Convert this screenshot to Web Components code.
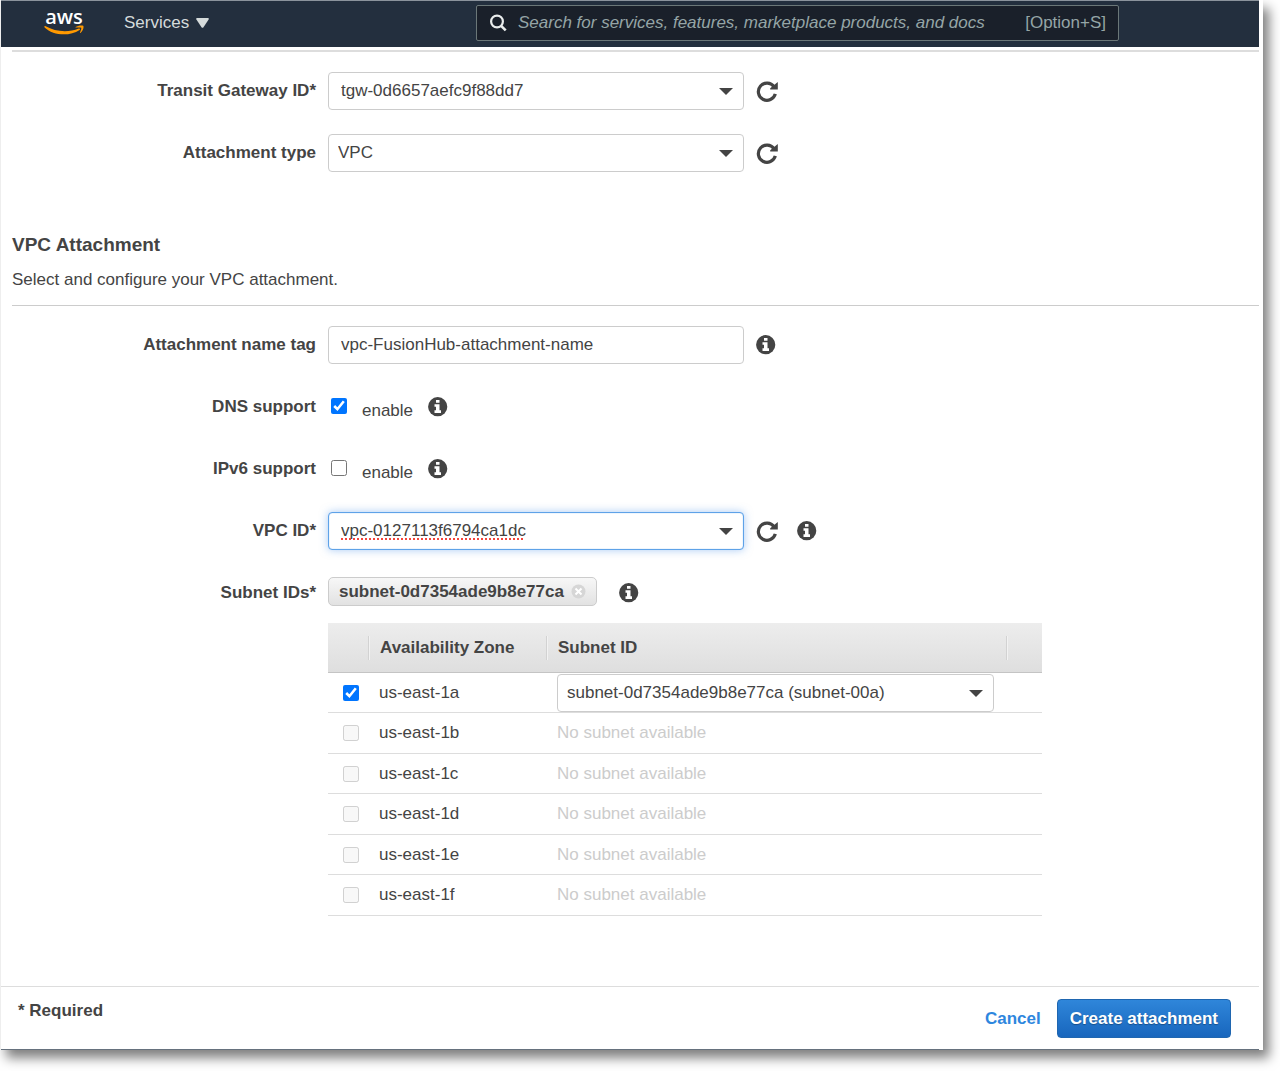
<!DOCTYPE html>
<html lang="en">
<head>
<meta charset="utf-8">
<title>Create Transit Gateway Attachment</title>
<style>
body {
    margin: 0;
    background: #fff;
    color: #444;
    font: 17px/24px "Liberation Sans", Arial, sans-serif;
}
</style>
</head>
<body>

<console-window>
    <console-nav slot="nav"></console-nav>

    <form-section>
        <combo-field label="Transit Gateway ID*" value="tgw-0d6657aefc9f88dd7">
            <reload-button></reload-button>
        </combo-field>
        <select-field label="Attachment type" value="VPC">
            <reload-button></reload-button>
        </select-field>
    </form-section>

    <section-heading>
        VPC Attachment
        <span slot="description">Select and configure your VPC attachment.</span>
    </section-heading>

    <form-section>
        <text-field label="Attachment name tag" value="vpc-FusionHub-attachment-name">
            <info-button></info-button>
        </text-field>
        <check-field label="DNS support" checked>
            <info-button></info-button>
        </check-field>
        <check-field label="IPv6 support">
            <info-button></info-button>
        </check-field>
        <combo-field label="VPC ID*" value="vpc-0127113f6794ca1dc" active>
            <reload-button></reload-button>
            <info-button></info-button>
        </combo-field>
        <token-field label="Subnet IDs*" value="subnet-0d7354ade9b8e77ca">
            <info-button></info-button>
        </token-field>
    </form-section>

    <subnet-table zones="us-east-1a us-east-1b us-east-1c us-east-1d us-east-1e us-east-1f"
        selected="us-east-1a" subnet="subnet-0d7354ade9b8e77ca (subnet-00a)"></subnet-table>

    <form-footer slot="footer">* Required</form-footer>
</console-window>

<script>
function makeTemplate(html) {
    const template = document.createElement('template');
    template.innerHTML = html;
    return template;
}

// every element clones its template into an open shadow root
class BaseElement extends HTMLElement {
    constructor() {
        super();
        this.attachShadow({ mode: 'open' });
        this.shadowRoot.appendChild(this.constructor.template.content.cloneNode(true));
    }
    $(selector) {
        return this.shadowRoot.querySelector(selector);
    }
}

// shared by all controls with a drop-down arrow
const controlStyles = `
* { box-sizing: border-box; }
.control {
    position: relative;
    width: 416px;
}
.control input, .control select {
    display: block;
    width: 100%;
    height: 38px;
    margin: 0;
    padding: 0 40px 0 12px;
    border: 1px solid #ccc;
    border-radius: 4px;
    background: #fff;
    color: #444;
    font: inherit;
    appearance: none;
    outline: none;
}
.control select { padding-left: 9px; }
.caret {
    position: absolute;
    right: 11px;
    top: 16px;
    border: 7px solid transparent;
    border-top-color: #444;
    border-bottom: 0;
    pointer-events: none;
}
`;

const checkStyles = `
input[type=checkbox] {
    width: 16px;
    height: 16px;
    margin: 0;
    accent-color: #0075ff;
}
`;

const fieldStyles = controlStyles + checkStyles + `
:host {
    display: flex;
    align-items: center;
    gap: 12px;
    height: 38px;
}
.name {
    flex: 0 0 304px;
    text-align: right;
    font-weight: bold;
}
.extras {
    display: flex;
    align-items: center;
    gap: 19px;
}
`;

class ConsoleWindow extends BaseElement {
    static template = makeTemplate(`
<style>
:host {
    display: block;
    margin: 0 17px 21px 0;
    padding-right: 4px;
    border-left: 1px solid #eee;
    background: #fff;
    box-shadow: 6px 8px 11px rgba(0, 0, 0, .5);
}
.frame {
    border-top: 1px solid #8b939c;
    border-bottom: 1px solid #66717d;
}
main {
    margin: 3px 0 0 11px;
    padding: 20px 0 70px;
    border-top: 2px solid #ddd;
}
</style>
<div class="frame">
    <slot name="nav"></slot>
    <main><slot></slot></main>
    <slot name="footer"></slot>
</div>
`);
}

class ConsoleNav extends BaseElement {
    static template = makeTemplate(`
<style>
:host, * { box-sizing: border-box; }
:host {
    display: flex;
    align-items: center;
    height: 46px;
    padding: 0 140px 2px 43px;
    background: #232f3e;
    color: #d5dbdb;
}
.logo {
    display: flex;
    flex-direction: column;
    align-items: center;
    width: 40px;
    margin-right: 40px;
    padding-bottom: 4px;
    color: #fff;
    font: 600 20px/20px "Open Sans", "Noto Sans", sans-serif;
    text-decoration: none;
}
.logo svg { margin-top: -2px; }
.services {
    display: flex;
    align-items: center;
    gap: 7px;
    padding: 0;
    border: 0;
    background: none;
    color: inherit;
    font: inherit;
}
.search {
    display: flex;
    align-items: center;
    flex: 0 1 643px;
    height: 36px;
    margin-left: auto;
    padding: 0 12px;
    border: 1px solid #6b7778;
    border-radius: 2px;
    background: #1a202a;
    color: #95a5a6;
}
.search input {
    flex: 1;
    min-width: 0;
    padding: 0 0 0 10px;
    border: 0;
    background: none;
    color: inherit;
    font: inherit;
    outline: none;
}
.search input::placeholder {
    color: #95a5a6;
    font-style: italic;
}
</style>
<a class="logo" href="#" aria-label="aws">aws
    <svg width="40" height="11" viewBox="0 0 40 11">
        <path fill="#f90" d="M.3 1.600C.5.900 1 .900 1.700 1.300 11 6.700 24 7.900 34.800 3.600c1-.4 1.800.6.8 1.300C25.500 11.700 9 10.600.6 2.400z"/>
        <path fill="#f90" d="M31.600 2C33.500.4 38 0 39.200.8c1 .9-.3 5.200-2.500 7-.5.4-.9.1-.7-.4.600-1.500 1.600-4 1.200-4.600-.5-.6-3.400-.4-5-.2-.6.1-1-.3-.6-.6z"/>
    </svg>
</a>
<button class="services" type="button">Services
    <svg width="13" height="10" viewBox="0 0 13 10"><path fill="currentColor" d="M1 0h11Q13.200.2 12.600 1.400L7.500 9.200Q6.500 10.400 5.500 9.200L.4 1.400Q-.2.2 1 0z"/></svg>
</button>
<label class="search">
    <svg width="19" height="18" viewBox="0 0 19 18" fill="none" stroke="#eaeded" stroke-width="2.200">
        <circle cx="8" cy="7.500" r="5.900"/>
        <path stroke-width="2.600" d="M12.100 11.800l4.600 4.600"/>
    </svg>
    <input type="search" aria-label="Search" placeholder="Search for services, features, marketplace products, and docs">
    <span>[Option+S]</span>
</label>
`);
}

class FormSection extends BaseElement {
    static template = makeTemplate(`
<style>
:host {
    display: grid;
    gap: 24px;
}
</style>
<slot></slot>
`);
}

class SectionHeading extends BaseElement {
    static template = makeTemplate(`
<style>
:host {
    display: block;
    margin: 61px 0 20px;
    padding-bottom: 13px;
    border-bottom: 1px solid #ccc;
}
h2 {
    margin: 0 0 11px;
    font-size: 19px;
    line-height: 24px;
}
p { margin: 0; }
</style>
<h2><slot></slot></h2>
<p><slot name="description"></slot></p>
`);
}

const iconButtonStyles = `
:host { display: block; }
button {
    display: block;
    padding: 0;
    border: 0;
    background: none;
    color: #444;
}
svg { display: block; }
`;

class InfoButton extends BaseElement {
    static template = makeTemplate(`
<style>${iconButtonStyles}</style>
<button type="button" aria-label="Info">
    <svg width="20" height="20" viewBox="0 0 20 20">
        <circle cx="9.700" cy="9.700" r="9.600" fill="currentColor"/>
        <path fill="#fff" d="M8 3h3.500v2.700H8zM6.500 7.300h5v6H13v2.600H6.500v-2.600H8V9.800H6.500z"/>
    </svg>
</button>
`);
}

class ReloadButton extends BaseElement {
    static template = makeTemplate(`
<style>${iconButtonStyles}</style>
<button type="button" aria-label="Reload">
    <svg width="22" height="22" viewBox="0 0 22 22">
        <path fill="none" stroke="currentColor" stroke-width="3.200" d="M19.300 13.800A8.600 8.600 0 1 1 18 6.700"/>
        <path fill="currentColor" d="M21.800 2v7.400h-7.600v-1.200z"/>
    </svg>
</button>
`);
}

class FieldElement extends BaseElement {
    connectedCallback() {
        this.$('.name').textContent = this.getAttribute('label');
    }
}

class TextField extends FieldElement {
    static template = makeTemplate(`
<style>${fieldStyles}</style>
<label class="name" for="field"></label>
<div class="control"><input id="field" type="text"></div>
<div class="extras"><slot></slot></div>
`);
    connectedCallback() {
        super.connectedCallback();
        this.$('#field').value = this.getAttribute('value');
    }
}

class ComboField extends TextField {
    static template = makeTemplate(`
<style>
${fieldStyles}
:host([active]) input {
    border-color: #5ea2e8;
    box-shadow: inset 0 0 1px #5ea2e8, 0 0 8px rgba(82, 150, 236, .5);
    text-decoration: underline dotted #f4443c 2px;
    text-underline-offset: 2px;
    text-decoration-skip-ink: none;
}
</style>
<label class="name" for="field"></label>
<div class="control">
    <input id="field" type="text" role="combobox" aria-expanded="false" spellcheck="false">
    <span class="caret"></span>
</div>
<div class="extras"><slot></slot></div>
`);
}

class SelectField extends FieldElement {
    static template = makeTemplate(`
<style>${fieldStyles}</style>
<label class="name" for="field"></label>
<div class="control">
    <select id="field"></select>
    <span class="caret"></span>
</div>
<div class="extras"><slot></slot></div>
`);
    connectedCallback() {
        super.connectedCallback();
        this.$('#field').add(new Option(this.getAttribute('value')));
    }
}

class CheckField extends FieldElement {
    static template = makeTemplate(`
<style>
${fieldStyles}
.check {
    display: flex;
    align-items: center;
    gap: 15px;
    padding: 0 3px;
}
.check input { margin-bottom: 3px; }
.check span { padding-top: 7px; }
</style>
<span class="name" id="name"></span>
<label class="check">
    <input type="checkbox" aria-describedby="name">
    <span>enable</span>
</label>
<div class="extras"><slot></slot></div>
`);
    connectedCallback() {
        super.connectedCallback();
        this.$('input').checked = this.hasAttribute('checked');
    }
}

class TokenField extends FieldElement {
    static template = makeTemplate(`
<style>
${fieldStyles}
.token {
    display: flex;
    align-items: center;
    gap: 7px;
    height: 29px;
    margin: 0 10px 3px 0;
    padding: 0 10px;
    border: 1px solid #ccc;
    border-radius: 5px;
    background: linear-gradient(#f7f7f7, #e2e2e2);
    font-weight: bold;
}
.token button {
    padding: 0;
    border: 0;
    background: none;
}
svg { display: block; }
</style>
<span class="name"></span>
<span class="token">
    <span class="value"></span>
    <button type="button" aria-label="Remove">
        <svg width="15" height="15" viewBox="0 0 15 15">
            <circle cx="7.500" cy="7.500" r="7" fill="#d6d6d6"/>
            <path stroke="#fff" stroke-width="2" d="M4.500 4.500l6 6M10.500 4.500l-6 6"/>
        </svg>
    </button>
</span>
<div class="extras"><slot></slot></div>
`);
    connectedCallback() {
        super.connectedCallback();
        this.$('.value').textContent = this.getAttribute('value');
    }
}

class SubnetTable extends BaseElement {
    static template = makeTemplate(`
<style>
${controlStyles}
${checkStyles}
:host {
    display: block;
    margin: 11px 0 0 316px;
}
table {
    width: 714px;
    table-layout: fixed;
    border-collapse: separate;
    border-spacing: 0;
}
th {
    height: 50px;
    padding: 0;
    border-bottom: 1px solid #c4c4c4;
    text-align: left;
}
thead { background: linear-gradient(#ededed, #dedede); }
/* short divider between the header cells */
th span {
    display: block;
    padding-left: 11px;
}
th + th span {
    border-left: 1px solid #d2d2d2;
    box-shadow: inset 1px 0 #f2f2f2;
}
td {
    height: 41px;
    padding: 0 0 0 11px;
    border-bottom: 1px solid #ddd;
}
tr:nth-child(odd) td { height: 40px; }
td:first-child { padding-left: 15px; }
td input { display: block; }
td .control { width: 437px; }
.empty { color: #ccc; }
</style>
<table>
    <colgroup><col width="40"><col width="178"><col width="460"><col width="36"></colgroup>
    <thead>
        <tr>
            <th></th>
            <th><span>Availability Zone</span></th>
            <th><span>Subnet ID</span></th>
            <th><span>&nbsp;</span></th>
        </tr>
    </thead>
    <tbody></tbody>
</table>
`);
    connectedCallback() {
        const selected = this.getAttribute('selected');
        this.getAttribute('zones').split(' ').forEach(zone => {
            const on = zone === selected;
            const row = this.$('tbody').insertRow();
            row.innerHTML = `
                <td><input type="checkbox" id="${zone}" ${on ? 'checked' : 'disabled'}></td>
                <td><label for="${zone}">${zone}</label></td>
                <td colspan="2">${on ? this.subnetSelect() : '<span class="empty">No subnet available</span>'}</td>`;
        });
    }
    subnetSelect() {
        return `<div class="control">
            <select aria-label="Subnet ID"><option>${this.getAttribute('subnet')}</option></select>
            <span class="caret"></span>
        </div>`;
    }
}

class FormFooter extends BaseElement {
    static template = makeTemplate(`
<style>
:host {
    display: flex;
    justify-content: space-between;
    padding: 12px 28px 11px 17px;
    border-top: 1px solid #ddd;
    font-weight: bold;
}
.actions {
    display: flex;
    align-items: center;
    gap: 16px;
}
a {
    color: #2e86de;
    text-decoration: none;
}
button {
    height: 39px;
    padding: 0 12px;
    border: 1px solid #1f66b0;
    border-radius: 4px;
    background: linear-gradient(#2f86da, #1866bd);
    color: #fff;
    font: inherit;
    text-shadow: 0 1px 1px rgba(0, 0, 0, .3);
}
</style>
<span><slot></slot></span>
<div class="actions">
    <a href="#">Cancel</a>
    <button type="submit">Create attachment</button>
</div>
`);
}

customElements.define('console-window', ConsoleWindow);
customElements.define('console-nav', ConsoleNav);
customElements.define('form-section', FormSection);
customElements.define('section-heading', SectionHeading);
customElements.define('info-button', InfoButton);
customElements.define('reload-button', ReloadButton);
customElements.define('text-field', TextField);
customElements.define('combo-field', ComboField);
customElements.define('select-field', SelectField);
customElements.define('check-field', CheckField);
customElements.define('token-field', TokenField);
customElements.define('subnet-table', SubnetTable);
customElements.define('form-footer', FormFooter);
</script>
</body>
</html>
